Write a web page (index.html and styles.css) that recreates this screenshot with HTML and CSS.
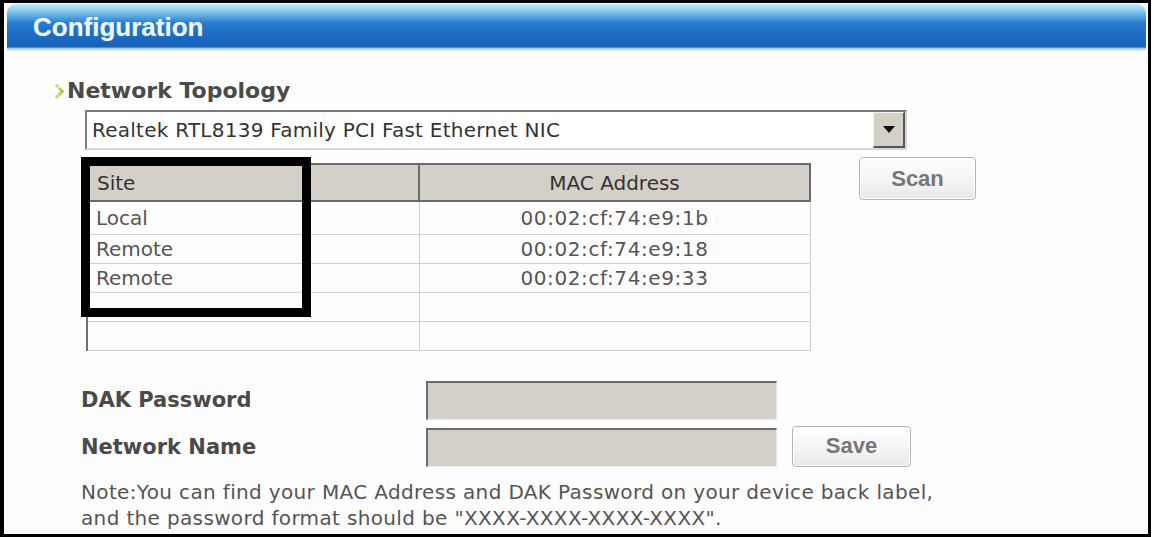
FILE: index.html
```html
<!DOCTYPE html>
<html>
<head>
<meta charset="utf-8">
<link rel="stylesheet" href="styles.css">
</head>
<body>
<div class="frame">
  <div class="header">Configuration</div>
  <div class="content">
    <div class="section-title">
      <svg class="bullet" width="9" height="14" viewBox="0 0 9 14">
        <circle cx="2" cy="2" r="1.8" fill="#c2de5c"/>
        <circle cx="5" cy="5" r="1.8" fill="#aed143"/>
        <circle cx="7" cy="7.5" r="1.8" fill="#9cc52f"/>
        <circle cx="5" cy="10" r="1.8" fill="#aed143"/>
        <circle cx="2" cy="12.5" r="1.8" fill="#c2de5c"/>
      </svg>
      <span>Network Topology</span>
    </div>
    <div class="select">
      <span class="select-text">Realtek RTL8139 Family PCI Fast Ethernet NIC</span>
      <span class="select-btn"><svg width="12" height="7" viewBox="0 0 12 7"><path d="M0 0H12L6 7Z" fill="#111"/></svg></span>
    </div>
    <div class="table-row">
      <div class="table-wrap">
        <table class="grid">
          <thead>
            <tr><th class="c-site">Site</th><th class="c-mac">MAC Address</th></tr>
          </thead>
          <tbody>
            <tr><td class="c-site">Local</td><td class="c-mac">00:02:cf:74:e9:1b</td></tr>
            <tr><td class="c-site">Remote</td><td class="c-mac">00:02:cf:74:e9:18</td></tr>
            <tr><td class="c-site">Remote</td><td class="c-mac">00:02:cf:74:e9:33</td></tr>
            <tr><td class="c-site"></td><td class="c-mac"></td></tr>
            <tr><td class="c-site"></td><td class="c-mac"></td></tr>
          </tbody>
        </table>
        <div class="highlight"></div>
      </div>
      <button class="btn scan">Scan</button>
    </div>
    <div class="form">
      <div class="label">DAK Password</div>
      <div class="field"></div>
      <div></div>
      <div class="label">Network Name</div>
      <div class="field"></div>
      <button class="btn save">Save</button>
    </div>
    <p class="note">Note:You can find your MAC Address and DAK Password on your device back label,<br>and the password format should be "XXXX-XXXX-XXXX-XXXX".</p>
  </div>
</div>
</body>
</html>
```
FILE: styles.css
```css
html, body {
  margin: 0;
  padding: 0;
  background: #ffffff;
}
.frame {
  box-sizing: border-box;
  width: 1151px;
  height: 537px;
  border: 3px solid #000;
  border-left-width: 4px;
  background: #fefdfd;
  overflow: hidden;
  position: relative;
}
.header {
  margin: 1px 2px 0 3px;
  height: 47px;
  border-radius: 9px 9px 0 0;
  background: linear-gradient(#bfe8fa 0%, #92d3f2 12%, #5aa9e2 26%, #2a7dd0 40%, #1d6fc7 60%, #1763bb 85%, #1a63b6 91%, #a9d0ef 95%, #eef6fb 100%);
  color: #eef7fc;
  font-family: "Liberation Sans", Arial, sans-serif;
  font-weight: bold;
  font-size: 26px;
  line-height: 47px;
  padding-left: 26px;
  text-shadow: 0 0 1px #6aa8dc;
}
.content {
  padding: 26px 0 0 51px;
  font-family: "DejaVu Sans", Verdana, sans-serif;
  color: #555;
}
.section-title {
  display: flex;
  align-items: center;
  gap: 3px;
  font-weight: bold;
  font-size: 22px;
  color: #4a4a4a;
  height: 26px;
}
.bullet {
  flex: none;
  margin-top: 1px;
}
.select {
  margin: 7px 0 0 30px;
  box-sizing: border-box;
  width: 822px;
  height: 40px;
  border: 2px solid #7b7b7b;
  border-right-color: #d6d6d6;
  border-bottom-color: #d6d6d6;
  background: #fff;
  display: flex;
  align-items: center;
  justify-content: space-between;
  padding-left: 5px;
}
.select-text {
  font-size: 20px;
  letter-spacing: 0.25px;
  color: #333;
}
.select-btn {
  box-sizing: border-box;
  width: 32px;
  height: 36px;
  background: #d4d0c8;
  border-right: 2px solid #555;
  border-bottom: 2px solid #555;
  border-top: 1px solid #f2f2f2;
  border-left: 1px solid #f2f2f2;
  display: flex;
  align-items: center;
  justify-content: center;
}
.table-row {
  display: flex;
  align-items: flex-start;
  gap: 48px;
  margin: 7px 0 0 31px;
}
.table-wrap {
  position: relative;
  margin-top: 6px;
}
.grid {
  border-collapse: collapse;
  width: 725px;
  font-size: 20px;
  color: #555;
}
.grid th {
  height: 37px;
  box-sizing: border-box;
  background: #d4d0c8;
  font-weight: normal;
  color: #333;
  border-top: 2px solid #6a6a6a;
  border-bottom: 2px solid #6a6a6a;
  border-left: 2px solid #6a6a6a;
  border-right: 2px solid #6a6a6a;
  padding: 0;
}
.grid th.c-site {
  text-align: left;
  padding-left: 9px;
  border-right: 1px solid #6a6a6a;
}
.grid td {
  height: 29px;
  box-sizing: border-box;
  padding: 0;
  border-bottom: 1px solid #d0d0d0;
  border-right: 1px solid #d0d0d0;
  line-height: 24px;
}
.grid td.c-site {
  width: 332px;
  padding-left: 8px;
  border-left: 2px solid #707070;
}
.grid td.c-mac {
  text-align: center;
  border-left: 1px solid #d0d0d0;
  letter-spacing: 0.6px;
}
.grid tbody tr:first-child td {
  height: 33px;
}
.highlight {
  position: absolute;
  left: -5px;
  top: -6px;
  width: 230px;
  height: 160px;
  box-sizing: border-box;
  border: 9px solid #000;
}
.btn {
  box-sizing: border-box;
  border: 1px solid #b5b5b5;
  border-radius: 4px;
  background: linear-gradient(#ffffff, #f3f3f3 60%, #e8e8e8);
  font-family: "Liberation Sans", Arial, sans-serif;
  font-weight: bold;
  font-size: 22px;
  color: #777;
  padding: 0;
  box-shadow: inset 0 0 0 1px #fff;
}
.scan {
  width: 117px;
  height: 43px;
}
.form {
  display: grid;
  grid-template-columns: 344px 351px 135px;
  grid-auto-rows: 39px;
  row-gap: 8px;
  align-items: center;
  margin: 30px 0 0 27px;
}
.label {
  font-weight: bold;
  font-size: 21px;
  color: #4a4a4a;
  margin-left: -1px;
}
.field {
  height: 39px;
  box-sizing: border-box;
  background: #d4d0c8;
  border-top: 2px solid #6b6b6b;
  border-left: 2px solid #6b6b6b;
  border-right: 1px solid #e8e8e8;
  border-bottom: 1px solid #e8e8e8;
}
.save {
  width: 119px;
  height: 41px;
  margin-left: 15px;
  align-self: end;
}
.note {
  margin: 12px 0 0 26px;
  font-size: 20px;
  letter-spacing: 0.35px;
  line-height: 26px;
  color: #555;
}
```
